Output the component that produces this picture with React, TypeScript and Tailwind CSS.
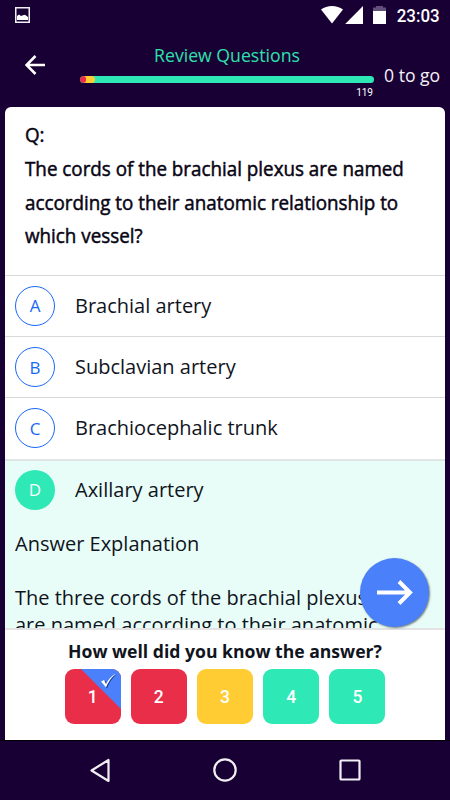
import clsx from "clsx"

const choices = [
  { letter: "A", text: "Brachial artery" },
  { letter: "B", text: "Subclavian artery" },
  { letter: "C", text: "Brachiocephalic trunk" },
]

const ratings = [
  { value: 1, color: "bg-[#e82e49]" },
  { value: 2, color: "bg-[#e82e49]" },
  { value: 3, color: "bg-[#ffcc33]" },
  { value: 4, color: "bg-[#2ee9b5]" },
  { value: 5, color: "bg-[#2ee9b5]" },
]

function StatusBar() {
  return (
    <div className="flex h-8 shrink-0 items-start justify-between pl-[15px] pr-[10px]">
      <svg className="mt-[7px]" width="15" height="16" viewBox="0 0 15 16">
        <rect x="0.75" y="0.75" width="13.5" height="14.5" fill="none" stroke="#f0f0f4" strokeWidth="1.5" />
        <path d="M2 13V9l2-1.5 2 1.5 2-.8 2-.4 3 2.2v3z" fill="#fff" />
      </svg>
      <div className="flex items-start">
        <svg className="mt-[6px]" width="66" height="19" viewBox="0 0 66 19">
          <path d="M0 3.6C6-1.2 16-1.2 22 3.6L11 17.5z" fill="#fff" />
          <path d="M42 0v18H24.2z" fill="#fff" />
          <path d="M55 0h7v1.5h3V5H52V1.5h3z" fill="#62507a" />
          <path d="M52 5h13v13H52z" fill="#fff" />
        </svg>
        <span className="ml-[7px] mt-[3.5px] origin-right scale-x-[0.94] font-['Roboto',sans-serif] text-[18px] font-medium leading-6 text-white">
          23:03
        </span>
      </div>
    </div>
  )
}

function Header() {
  return (
    <div className="flex h-[75px] shrink-0">
      <svg className="ml-[25px] mt-[23px] shrink-0" width="20" height="20" viewBox="0 0 20 20" fill="none" stroke="#fff" strokeWidth="2.6">
        <path d="M20 10H2M10.5 1L1.5 10l9 9" />
      </svg>
      <div className="ml-[35px] w-[294px] shrink-0">
        <div className="mt-[10px] scale-x-[0.95] text-center text-[18.6px] leading-[26px] text-[#2ee0ad]">Review Questions</div>
        <div className="mt-[8px] flex h-[7px] overflow-hidden rounded-full bg-[#2ee9b5]">
          <div className="z-10 w-[6px] rounded-full bg-[#e82e49]" />
          <div className="-ml-[3px] w-[12px] rounded-r-full bg-[#ffcc33]" />
        </div>
        <div className="mt-[4px] pr-[1px] text-right font-['Roboto',sans-serif] text-[10px] leading-3 text-white">119</div>
      </div>
      <div className="ml-[10px] mt-[31px] whitespace-nowrap text-[17.6px] leading-6 text-[#f4f2f7]">0 to go</div>
    </div>
  )
}

function NextButton() {
  return (
    <button className="absolute right-[16px] top-[451px] flex h-[69px] w-[69px] items-center justify-center rounded-full bg-[#4a80fa] shadow-[1px_1px_2px_rgba(0,0,0,0.5)]">
      <svg width="36" height="26" viewBox="0 0 36 26" fill="none" stroke="#fff" strokeWidth="4">
        <path d="M0 12.5h33M22 1.5l11 11-11 11" />
      </svg>
    </button>
  )
}

export default function App() {
  return (
    <div className="flex h-[800px] w-[450px] flex-col overflow-hidden bg-[#190034] font-['Open_Sans',sans-serif]">
      <StatusBar />
      <Header />

      <main className="relative ml-[5px] flex h-[633px] w-[440px] shrink-0 flex-col overflow-hidden rounded-t-[6px] bg-white text-[#10141d]">
        <section className="h-[168px] shrink-0 origin-left pl-[20px] pt-[11px] text-[20px] leading-[33.8px] text-[#080414] [-webkit-text-stroke:0.5px_#080414]">
          <div className="origin-left scale-x-[0.94]">
            <p>Q:</p>
            <p className="whitespace-nowrap">
              The cords of the brachial plexus are named
              <br />
              according to their anatomic relationship to
              <br />
              which vessel?
            </p>
          </div>
        </section>

        {choices.map((choice) => (
          <div key={choice.letter} className="flex h-[61.2px] shrink-0 items-center border-t border-[#d9d9d9] pl-[10px]">
            <div className="flex h-10 w-10 items-center justify-center rounded-full border border-[#1768f5] text-[17px] text-[#1768f5]">
              {choice.letter}
            </div>
            <div className="ml-5 text-[20px]">{choice.text}</div>
          </div>
        ))}

        <section className="h-[169.4px] shrink-0 overflow-hidden border-t-2 border-[#dfe5e4] bg-[#e8fdf8] pl-[10px]">
          <div className="flex h-[59px] items-center">
            <div className="flex h-10 w-10 items-center justify-center rounded-full bg-[#2ee9b5] text-[17px] leading-[24px] text-white">D</div>
            <div className="ml-5 text-[20px]">Axillary artery</div>
          </div>
          <div className="whitespace-nowrap text-[20px] leading-[27px]">
            <p className="mt-[10.5px]">Answer Explanation</p>
            <p className="mt-[27px]">
              The three cords of the brachial plexus
              <br />
              are named according to their anatomic
            </p>
          </div>
        </section>

        <section className="flex grow flex-col items-center border-t-2 border-[#e3e3e3]">
          <h2 className="mt-[9px] text-[17.6px] font-bold leading-6">How well did you know the answer?</h2>
          <div className="mt-[6px] flex gap-[10.2px]">
            {ratings.map((rating) => (
              <button
                key={rating.value}
                className={clsx(
                  "relative flex h-[55.5px] w-[56px] items-center justify-center overflow-hidden rounded-[9px] font-['Roboto',sans-serif] text-[17.5px] font-medium text-white",
                  rating.color,
                )}
              >
                {rating.value === 1 && (
                  <svg className="absolute right-0 top-0" width="40" height="40" viewBox="0 0 40 40">
                    <path d="M0 0h40v40z" fill="#4a80fa" />
                    <path d="M21 13.5l3.5-1.5 2 3.5Q29 8.5 36 5 29 11 26 19.500z" fill="#1c3f96" />
                    <path d="M20 12.5l3-1.5 2 4Q29 7.5 35 4.5 28 10.500 25 18.500z" fill="#fff" />
                  </svg>
                )}
                <span className="relative">{rating.value}</span>
              </button>
            ))}
          </div>
        </section>

        <NextButton />
      </main>

      <nav className="flex grow items-center justify-between border-t border-black px-[89px] pb-[1px]">
        <svg width="22" height="25" viewBox="0 0 22 25" fill="none" stroke="#f1eff4" strokeWidth="2.2" strokeLinejoin="round">
          <path d="M19.5 2v21L2.5 12.5z" />
        </svg>
        <svg width="24" height="24" viewBox="0 0 24 24" fill="none" stroke="#f1eff4" strokeWidth="2.2">
          <circle cx="12" cy="12" r="10.7" />
        </svg>
        <svg width="22" height="22" viewBox="0 0 22 22" fill="none" stroke="#f1eff4" strokeWidth="2.2">
          <rect x="1.5" y="1.5" width="19" height="19" rx="0.8" />
        </svg>
      </nav>
    </div>
  )
}
